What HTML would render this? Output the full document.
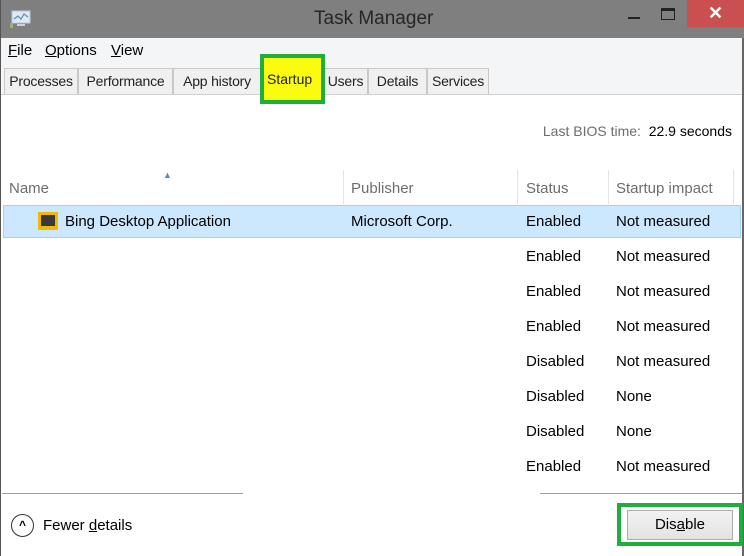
<!DOCTYPE html>
<html><head><style>
*{margin:0;padding:0;box-sizing:border-box}
body{width:744px;height:556px;overflow:hidden;font-family:"Liberation Sans",sans-serif;background:#fff;position:relative;color:#000}
.a{position:absolute;white-space:nowrap}
.t{font-size:15px}
.g{color:#6d6d6d}
.tab{position:absolute;top:68px;height:26px;border:1px solid #c8c8c8;border-bottom:none;background:#f0f0f0;font-size:14px;line-height:25px;text-align:center;color:#222;letter-spacing:-0.2px}
.vl{position:absolute;top:170px;width:1px;height:34px;background:#e3e3e3}
</style></head><body>
<div class="a" style="left:0;top:0;width:744px;height:38px;background:#7f7f7f"></div>
<svg class="a" style="left:10px;top:10px" width="22" height="18"><rect x="2" y="1" width="18" height="12" fill="#dfe9f2" stroke="#b8c8d8"/><polyline points="4,9 8,6 11,9 14,4 18,7" fill="none" stroke="#5a8ab8" stroke-width="1.2"/><rect x="0" y="13" width="3" height="5" fill="#8fb878"/><rect x="7" y="14" width="8" height="2" fill="#c8d4dc"/></svg>
<div class="a" style="left:314px;top:8px;font-size:19px;color:#262626">Task Manager</div>
<div class="a" style="left:628px;top:17px;width:12px;height:2px;background:#222"></div>
<div class="a" style="left:661px;top:8px;width:14px;height:12px;border:1px solid #222;border-top:3px solid #222"></div>
<div class="a" style="left:687px;top:0;width:57px;height:27px;background:#c9504e;color:#fff;font-size:18px;text-align:center;line-height:26px;font-weight:bold">✕</div>
<div class="a" style="left:0;top:38px;width:744px;height:24px;background:#f4f5f7"></div>
<div class="a t" style="left:8px;top:42px"><u>F</u>ile</div>
<div class="a t" style="left:45px;top:42px"><u>O</u>ptions</div>
<div class="a t" style="left:111px;top:42px"><u>V</u>iew</div>
<div class="a" style="left:0;top:62px;width:744px;height:32px;background:#f4f5f7"></div>
<div class="tab" style="left:4px;width:74px">Processes</div>
<div class="tab" style="left:78px;width:95px">Performance</div>
<div class="tab" style="left:173px;width:88px">App history</div>
<div class="tab" style="left:261px;width:62px;background:#fff;border-color:#fff"></div>
<div class="tab" style="left:323px;width:45px">Users</div>
<div class="tab" style="left:368px;width:59px">Details</div>
<div class="tab" style="left:427px;width:62px">Services</div>
<div class="a" style="left:0;top:94px;width:744px;height:1px;background:#d0d0d0"></div>
<div class="a" style="left:260px;top:54px;width:65px;height:50px;border:4px solid #1fae3b"></div>
<div class="a" style="left:264px;top:58px;width:57px;height:42px;background:#fbfb10"></div>
<div class="a" style="left:267px;top:71px;color:#222;font-size:14px">Startup</div>
<div class="a" style="left:0;top:0;width:1px;height:556px;background:#555"></div>
<div class="a" style="left:742px;top:38px;width:2px;height:518px;background:#666"></div>
<div class="a" style="right:12px;top:123px;font-size:14px"><span class="g">Last BIOS time:</span>&nbsp; 22.9 seconds</div>
<div class="a" style="left:163px;top:170px;font-size:9px;color:#5a8ab8">▲</div>
<div class="a t g" style="left:9px;top:180px">Name</div>
<div class="vl" style="left:343px"></div>
<div class="a t g" style="left:351px;top:180px">Publisher</div>
<div class="vl" style="left:517px"></div>
<div class="a t g" style="left:526px;top:180px">Status</div>
<div class="vl" style="left:608px"></div>
<div class="a t g" style="left:616px;top:180px">Startup impact</div>
<div class="vl" style="left:733px"></div>
<div class="a" style="left:3px;top:205px;width:738px;height:33px;background:#cce8ff;border:1px solid #99d1ff"></div>
<div class="a" style="left:38px;top:212px;width:20px;height:18px;background:#f5b800"></div>
<div class="a" style="left:41px;top:215px;width:14px;height:11px;background:#3a3a3a"></div>
<div class="a t" style="left:65px;top:213px">Bing Desktop Application</div>
<div class="a t" style="left:351px;top:213px">Microsoft Corp.</div>
<div class="a t" style="left:526px;top:204px;line-height:35px">Enabled<br>Enabled<br>Enabled<br>Enabled<br>Disabled<br>Disabled<br>Disabled<br>Enabled</div>
<div class="a t" style="left:616px;top:204px;line-height:35px">Not measured<br>Not measured<br>Not measured<br>Not measured<br>Not measured<br>None<br>None<br>Not measured</div>
<div class="a" style="left:2px;top:493px;width:241px;height:1px;background:#a0a0a0"></div>
<div class="a" style="left:540px;top:493px;width:202px;height:1px;background:#a0a0a0"></div>
<div class="a" style="left:11px;top:514px;width:23px;height:23px;border:1px solid #333;border-radius:50%;text-align:center;font-size:12px;line-height:21px;font-weight:bold">^</div>
<div class="a t" style="left:43px;top:517px">Fewer <u>d</u>etails</div>
<div class="a" style="left:617px;top:503px;width:126px;height:43px;border:4px solid #1fae3b"></div>
<div class="a" style="left:627px;top:510px;width:106px;height:30px;background:linear-gradient(#f2f2f2,#e3e3e3);border:1px solid #acacac;text-align:center;font-size:15px;line-height:28px">Dis<u>a</u>ble</div>
</body></html>
